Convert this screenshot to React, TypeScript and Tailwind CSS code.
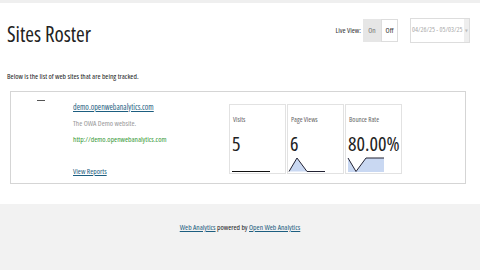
const font = { fontFamily: '"Open Sans", "DejaVu Sans Condensed", sans-serif' };

function Stat({ label, value, children }: { label: string; value: string; children: React.ReactNode }) {
  return (
    <div className="w-[57px] h-[70px] border border-[#e2e2e2] bg-white flex flex-col">
      <div className="text-[7px] text-[#666] pl-[3px] pt-[11px] leading-none">{label}</div>
      <div className="text-[20px] text-[#222] pl-[2px] mt-[11px] leading-none">{value}</div>
      <div className="mt-auto h-[16px]">{children}</div>
    </div>
  );
}

export default function App() {
  return (
    <div className="w-[480px] h-[270px] flex flex-col bg-white text-[#333] font-stretch-condensed" style={font}>
      <div className="h-[3px] bg-[#efefef] shrink-0" />
      <div className="px-[7px] pt-[15px] h-[201px] shrink-0">
        <div className="flex items-start justify-between">
          <h1 className="text-[21px] text-[#222] mt-[6px] leading-none">Sites Roster</h1>
          <div className="flex items-center mr-[3px]">
            <span className="text-[7.5px] text-[#333] mr-[2px]">Live View:</span>
            <span className="h-[23px] w-[18px] bg-[#e6e6e6] text-[7.5px] text-[#777] flex items-center justify-center">On</span>
            <span className="h-[23px] w-[17px] border border-[#ddd] bg-white text-[7.5px] text-[#333] flex items-center justify-center">Off</span>
            <div className="ml-[12px] h-[25px] w-[60px] border border-[#ddd] flex items-center">
              <span className="text-[7px] text-[#aaa] pl-[1px] flex-1 whitespace-nowrap">04/26/25 - 05/03/25</span>
              <span className="w-[5px] h-full bg-[#eee] flex items-center justify-center text-[4px] text-[#bbb]">▼</span>
            </div>
          </div>
        </div>
        <p className="text-[7.5px] text-[#222] mt-[28px] leading-none">Below is the list of web sites that are being tracked.</p>
        <div className="mt-[10px] ml-[3px] w-[456px] h-[93px] border border-[#d5d5d5] flex">
          <div className="w-[62px] pl-[26px] pt-[8px]">
            <div className="w-[8px] h-[1px] bg-[#555]" />
          </div>
          <div className="w-[156px] flex flex-col pt-[11px]">
            <a className="text-[8px] text-[#1d5e80] underline leading-none">demo.openwebanalytics.com</a>
            <span className="text-[7.5px] text-[#999] mt-[9px] leading-none">The OWA Demo website.</span>
            <span className="text-[7.5px] text-[#3a9a3a] mt-[9px] leading-none">http://demo.openwebanalytics.com</span>
            <a className="text-[7.5px] text-[#1d5e80] underline mt-[24px] leading-none">View Reports</a>
          </div>
          <div className="flex gap-[1px] pt-[12px]">
            <Stat label="Visits" value="5">
              <svg width="55" height="16" viewBox="0 0 55 16">
                <line x1="2" y1="14.5" x2="40" y2="14.5" stroke="#111" strokeWidth="1.2" />
              </svg>
            </Stat>
            <Stat label="Page Views" value="6">
              <svg width="55" height="16" viewBox="0 0 55 16">
                <polygon points="1,14.5 9,1 19,14.5" fill="#c9d8f2" />
                <polyline points="1,14.5 9,1 19,14.5 37,14.5" fill="none" stroke="#223" strokeWidth="1" />
              </svg>
            </Stat>
            <Stat label="Bounce Rate" value="80.00%">
              <svg width="55" height="16" viewBox="0 0 55 16">
                <polygon points="2,1 10,14.5 20,1 38,1 38,15 2,15" fill="#c9d8f2" />
                <polyline points="2,1 10,14.5 20,1 38,1" fill="none" stroke="#223" strokeWidth="1" />
              </svg>
            </Stat>
          </div>
        </div>
      </div>
      <div className="flex-1 bg-[#f2f2f2] flex justify-center pt-[20px]">
        <p className="text-[7.5px] text-[#222] leading-none">
          <a className="text-[#1d5e80] underline">Web Analytics</a> powered by{' '}
          <a className="text-[#1d5e80] underline">Open Web Analytics</a>
        </p>
      </div>
    </div>
  );
}
